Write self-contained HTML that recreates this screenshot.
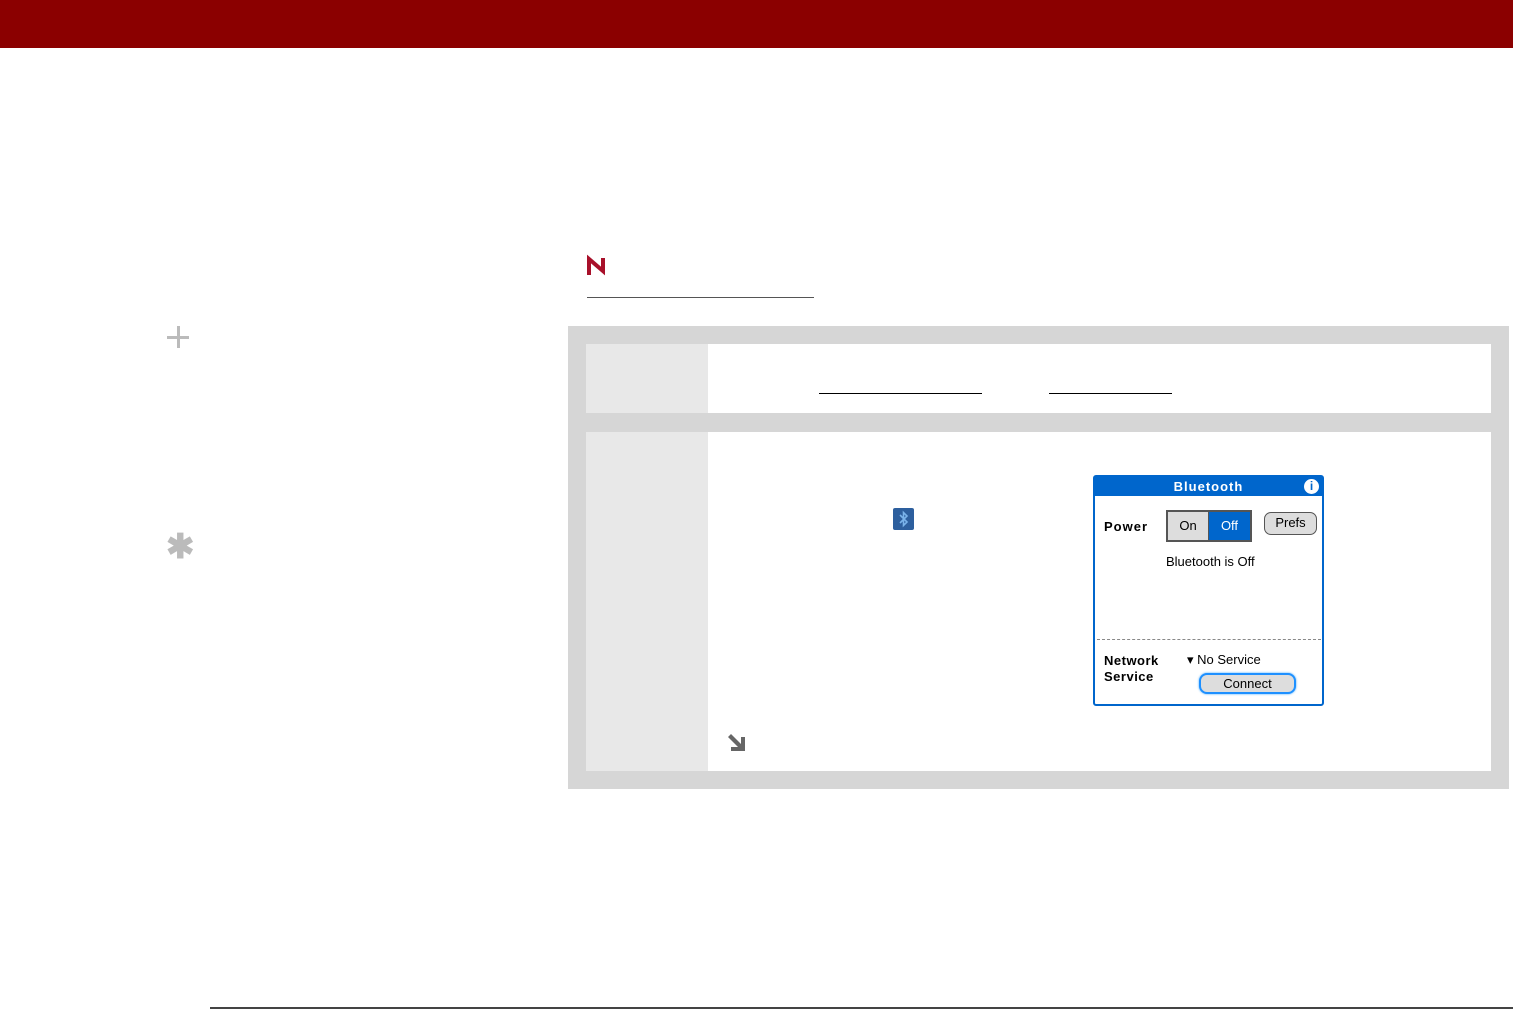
<!DOCTYPE html>
<html><head><meta charset="utf-8"><style>
*{margin:0;padding:0;box-sizing:border-box}
body{width:1513px;height:1010px;background:#fff;position:relative;overflow:hidden;font-family:"Liberation Sans",sans-serif}
.a{position:absolute}
</style></head><body>
<div class="a" style="left:0;top:0;width:1513px;height:48px;background:#8b0000"></div>
<svg class="a" style="left:586px;top:254px" width="22" height="22" viewBox="0 0 22 22"><path d="M3 21V5L17 17V4" fill="none" stroke="#a8102a" stroke-width="4" stroke-linejoin="miter"/></svg>
<div class="a" style="left:587px;top:297px;width:227px;height:1px;background:#555"></div>
<div class="a" style="left:167px;top:336px;width:22px;height:3px;background:#bbb"></div>
<div class="a" style="left:177px;top:326px;width:3px;height:22px;background:#bbb"></div>
<div class="a" style="left:166px;top:530px;font-size:34px;font-weight:bold;color:#bbb;line-height:34px">✱</div>
<div class="a" style="left:568px;top:326px;width:941px;height:463px;background:#d6d6d6"></div>
<div class="a" style="left:586px;top:344px;width:905px;height:69px;background:#fff"></div>
<div class="a" style="left:586px;top:344px;width:122px;height:69px;background:#e8e8e8"></div>
<div class="a" style="left:819px;top:393px;width:163px;height:1px;background:#000"></div>
<div class="a" style="left:1049px;top:393px;width:123px;height:1px;background:#000"></div>
<div class="a" style="left:586px;top:432px;width:905px;height:339px;background:#fff"></div>
<div class="a" style="left:586px;top:432px;width:122px;height:339px;background:#e8e8e8"></div>
<svg class="a" style="left:893px;top:508px" width="21" height="22" viewBox="0 0 21 22"><rect width="21" height="22" rx="2" fill="#2d5f9e"/><path d="M7 7l7 7-3.5 3.5V4.5L14 8l-7 7" fill="none" stroke="#7ab3ea" stroke-width="1.6"/></svg>
<svg class="a" style="left:725px;top:731px" width="22" height="22" viewBox="0 0 22 22"><path d="M3 6l3-3 10 10V6h4v14H6v-4h7z" fill="#666"/></svg>
<div class="a" style="left:1093px;top:475px;width:231px;height:231px;border:2px solid #0066cc;border-radius:3px;background:#fff;font-size:13px;color:#000">
 <div style="height:19px;background:#0066cc;color:#fff;font-weight:bold;text-align:center;line-height:19px;font-size:13px;letter-spacing:1px">Bluetooth</div>
 <div class="a" style="left:209px;top:2px;width:15px;height:15px;border-radius:50%;background:#fff;color:#0066cc;font-weight:bold;font-size:12px;text-align:center;line-height:15px">i</div>
 <div class="a" style="left:9px;top:42px;font-weight:bold;letter-spacing:1px">Power</div>
 <div class="a" style="left:71px;top:33px;width:86px;height:32px;border:2px solid #555;display:flex">
  <div style="width:41px;background:#ddd;border-right:1px solid #555;text-align:center;line-height:28px">On</div>
  <div style="flex:1;background:#0066cc;color:#fff;text-align:center;line-height:28px">Off</div></div>
 <div class="a" style="left:169px;top:35px;width:53px;height:23px;border:1px solid #555;border-radius:7px;background:#ddd;text-align:center;line-height:20px">Prefs</div>
 <div class="a" style="left:71px;top:77px">Bluetooth is Off</div>
 <div class="a" style="left:2px;top:162px;width:224px;border-top:1px dashed #888"></div>
 <div class="a" style="left:9px;top:176px;font-weight:bold;line-height:16px;letter-spacing:0.5px">Network<br>Service</div>
 <div class="a" style="left:92px;top:175px">▾ No Service</div>
 <div class="a" style="left:104px;top:196px;width:97px;height:21px;border:2px solid #1e90ff;border-radius:8px;background:#ddd;text-align:center;line-height:17px;box-shadow:0 0 2px #4af">Connect</div>
</div>
<div class="a" style="left:210px;top:1007px;width:1303px;height:2px;background:#444"></div>
</body></html>
